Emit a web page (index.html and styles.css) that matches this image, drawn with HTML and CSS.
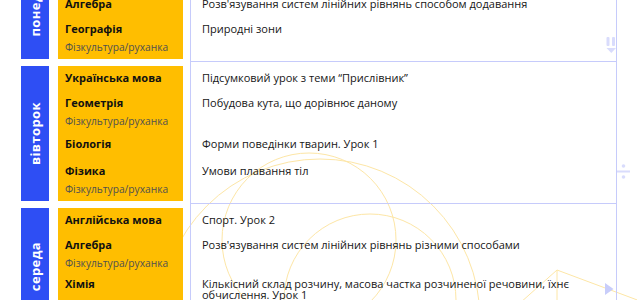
FILE: index.html
```html
<!DOCTYPE html>
<html lang="uk">
<head>
<meta charset="utf-8">
<title>Розклад уроків</title>
<link rel="stylesheet" href="styles.css">
</head>
<body>
<div class="page">
  <svg class="deco" width="637" height="300" viewBox="0 0 637 300" aria-hidden="true">
    <g class="deco-lines">
      <circle cx="320" cy="319" r="160"/>
      <circle cx="309" cy="240" r="87"/>
      <circle cx="370" cy="300" r="86"/>
      <line x1="557" y1="270" x2="520" y2="303"/>
      <line x1="557" y1="270" x2="640" y2="301"/>
      <line x1="557" y1="270" x2="557" y2="300"/>
    </g>
    <g class="deco-icons">
      <rect x="606.5" y="37" width="3" height="9" rx="1"/>
      <rect x="612" y="37" width="3" height="9" rx="1"/>
      <polygon points="606.5,48 616,48 611.3,53"/>
      <rect x="617" y="170.5" width="13" height="2"/>
      <circle cx="623.5" cy="166" r="1.8"/>
      <circle cx="623.5" cy="177" r="1.8"/>
      <polygon class="play" points="605,283 613.5,289 605,295"/>
    </g>
  </svg>

  <div class="schedule">
    <section class="day">
      <div class="day-label"><span>понеділок</span></div>
      <div class="subjects">
        <div class="lesson"><div class="name">Українська мова</div></div>
        <div class="lesson"><div class="name">Англійська мова</div></div>
        <div class="lesson"><div class="name">Алгебра</div></div>
        <div class="lesson lesson--sub"><div class="name">Географія</div><div class="sub">Фізкультура/руханка</div></div>
      </div>
      <div class="topics">
        <div class="lesson"><div class="topic">Складні речення</div></div>
        <div class="lesson"><div class="topic">Shopping</div></div>
        <div class="lesson"><div class="topic">Розв'язування систем лінійних рівнянь способом додавання</div></div>
        <div class="lesson lesson--sub"><div class="topic">Природні зони</div></div>
      </div>
    </section>

    <section class="day">
      <div class="day-label"><span>вівторок</span></div>
      <div class="subjects">
        <div class="lesson"><div class="name">Українська мова</div></div>
        <div class="lesson lesson--sub"><div class="name">Геометрія</div><div class="sub">Фізкультура/руханка</div></div>
        <div class="lesson lesson--spaced"><div class="name">Біологія</div></div>
        <div class="lesson lesson--sub"><div class="name">Фізика</div><div class="sub">Фізкультура/руханка</div></div>
      </div>
      <div class="topics">
        <div class="lesson"><div class="topic">Підсумковий урок з теми “Прислівник”</div></div>
        <div class="lesson lesson--sub"><div class="topic">Побудова кута, що дорівнює даному</div></div>
        <div class="lesson lesson--spaced"><div class="topic">Форми поведінки тварин. Урок 1</div></div>
        <div class="lesson lesson--sub"><div class="topic">Умови плавання тіл</div></div>
      </div>
    </section>

    <section class="day">
      <div class="day-label"><span>середа</span></div>
      <div class="subjects">
        <div class="lesson"><div class="name">Англійська мова</div></div>
        <div class="lesson lesson--sub"><div class="name">Алгебра</div><div class="sub">Фізкультура/руханка</div></div>
        <div class="lesson"><div class="name">Хімія</div></div>
        <div class="lesson"><div class="name">Історія України</div></div>
      </div>
      <div class="topics">
        <div class="lesson"><div class="topic">Спорт. Урок 2</div></div>
        <div class="lesson lesson--sub"><div class="topic">Розв'язування систем лінійних рівнянь різними способами</div></div>
        <div class="lesson"><div class="topic">Кількісний склад розчину, масова частка розчиненої речовини, їхнє обчислення. Урок 1</div></div>
        <div class="lesson"><div class="topic">Козацька доба</div></div>
      </div>
    </section>
  </div>
</div>
</body>
</html>
```

FILE: styles.css
```css
* { box-sizing: border-box; }

html, body {
  margin: 0;
  padding: 0;
  background: #ffffff;
}

body {
  font-family: "Open Sans", "Noto Sans", "DejaVu Sans", sans-serif;
  color: #161616;
}

.page {
  position: relative;
  width: 637px;
  height: 300px;
  overflow: hidden;
  display: flow-root;
  padding: 0 20px 0 21px;
}

.deco {
  position: absolute;
  left: 0;
  top: 0;
  z-index: 0;
}

.deco-lines {
  fill: none;
  stroke: #fde6a6;
  stroke-width: 1;
}

.deco-icons {
  fill: #d9dcfc;
}

.deco-icons .play {
  fill: #c8cdfa;
}

.schedule {
  position: relative;
  z-index: 1;
  margin-top: -62.2px;
}

.day {
  display: flex;
  align-items: stretch;
}

.day-label {
  width: 28px;
  margin: 3.5px 9px 3.5px 0;
  background: #2e4ef4;
  display: flex;
  align-items: center;
  justify-content: center;
}

.day-label span {
  writing-mode: vertical-rl;
  transform: rotate(180deg);
  color: #ffffff;
  font-weight: 700;
  font-size: 13px;
  line-height: 1;
  letter-spacing: 0.4px;
  white-space: nowrap;
}

.subjects {
  width: 125px;
  margin: 3.5px 7px 3.5px 0;
  padding: 0 0 4px 7px;
  background: #ffbe00;
}

.topics {
  flex: 1;
  border-left: 1px solid #c6cbfb;
  border-right: 1px solid #c6cbfb;
  border-bottom: 1px solid #c6cbfb;
  padding: 3.5px 30px 0 11px;
}

.lesson {
  height: 25px;
  padding-top: 5.5px;
}

.lesson--sub {
  height: 38.5px;
}

.lesson--spaced {
  height: 29px;
  padding-top: 7.5px;
}

.name {
  font-size: 11px;
  font-weight: 700;
  line-height: 13px;
  color: #111111;
  white-space: nowrap;
}

.sub {
  margin-top: 6px;
  font-size: 10.2px;
  font-weight: 400;
  line-height: 13px;
  color: #505050;
  white-space: nowrap;
}

.topic {
  margin-top: 1px;
  font-size: 11px;
  font-weight: 500;
  line-height: 11px;
  color: #161616;
}
```
